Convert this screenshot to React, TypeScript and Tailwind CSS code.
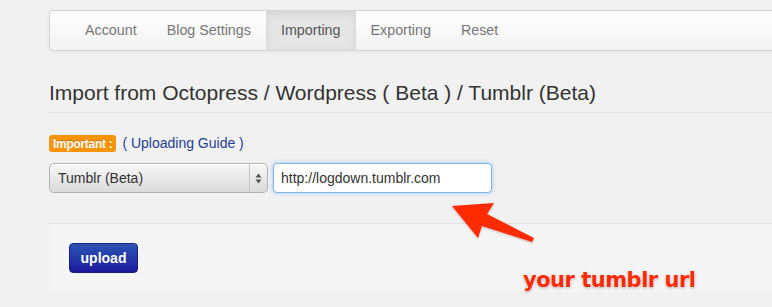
import React from "react";

export default function App() {
  const tabs = ["Account", "Blog Settings", "Importing", "Exporting", "Reset"];

  return (
    <div className="relative w-[772px] h-[307px] overflow-hidden bg-[#f1f1f1] font-['Liberation_Sans',Arial,sans-serif]">
      <div className="ml-[49px] w-[760px] pt-[10px]">
        {/* Settings tabs */}
        <div className="flex h-[41px] rounded-[4px] border border-[#d4d4d4] bg-gradient-to-b from-white to-[#f2f2f2] pl-[20px] shadow-[0_1px_3px_rgba(0,0,0,0.06)]">
          {tabs.map((t) => (
            <div
              key={t}
              className={`flex items-center px-[15px] text-[14.3px] ${
                t === "Importing"
                  ? "bg-[#e5e5e5] text-[#555] shadow-[inset_0_3px_8px_rgba(0,0,0,0.08)]"
                  : "text-[#777]"
              }`}
            >
              {t}
            </div>
          ))}
        </div>

        {/* Title */}
        <h1 className="mt-[27px] h-[30px] text-[21px] leading-[30px] text-[#333]">
          Import from Octopress / Wordpress ( Beta ) / Tumblr (Beta)
        </h1>
        <div className="mt-[4px] border-b border-[#e2e2e2]" />

        {/* Importing form */}
        <div className="mt-[22px] flex h-[17px] items-center gap-[6px]">
          <span className="flex h-[17px] items-center rounded-[3px] bg-[#f89406] px-[4px] text-[12px] font-bold tracking-[-0.3px] text-white [text-shadow:0_-1px_0_rgba(0,0,0,0.25)]">
            Important :
          </span>
          <span className="text-[14px] text-[#1d3f94]">( Uploading Guide )</span>
        </div>

        <div className="mt-[11px] flex gap-[5px]">
          <div className="flex h-[30px] w-[219px] items-center rounded-[5px] border border-[#b3b3b3] bg-gradient-to-b from-[#f8f8f8] to-[#dadada] shadow-[inset_0_1px_0_#fff]">
            <span className="flex-1 pl-[8px] text-[14px] text-[#333]">Tumblr (Beta)</span>
            <div className="flex h-full w-[18px] items-center justify-center border-l border-[#c4c4c4]">
              <svg width="7" height="11" viewBox="0 0 7 11">
                <path d="M3.5 0.5 L6.5 4.5 H0.5 Z" fill="#555" />
                <path d="M3.5 10.5 L6.5 6.5 H0.5 Z" fill="#555" />
              </svg>
            </div>
          </div>
          <div className="flex h-[30px] w-[219px] items-center rounded-[4px] border border-[#7eb3e8] bg-white pl-[7px] text-[14px] text-[#333] shadow-[0_0_4px_rgba(82,168,236,0.55)]">
            http://logdown.tumblr.com
          </div>
        </div>

        <div className="mt-[30px] h-[69px] border-t border-[#e2e2e2] bg-[#f5f5f5] px-[20px] pt-[19px]">
          <button className="h-[30px] w-[69px] rounded-[4px] border border-[#1a1d8c] bg-gradient-to-b from-[#2c52b4] to-[#1e169c] text-[14px] font-bold text-white">
            upload
          </button>
        </div>
      </div>

      {/* Annotation */}
      <svg className="absolute left-0 top-0" width="772" height="307" viewBox="0 0 772 307">
        <defs>
          <filter id="sh" x="-20%" y="-20%" width="140%" height="140%">
            <feDropShadow dx="0" dy="1" stdDeviation="1" floodColor="#000" floodOpacity="0.25" />
          </filter>
        </defs>
        <path
          d="M452 206 L494 203 L487 214 L534 238 L532 242 L482 226 L478 238 Z"
          fill="#ff2a00"
          filter="url(#sh)"
        />
      </svg>
      <div className="absolute left-[523px] top-[265px] font-['DejaVu_Sans',sans-serif] text-[21px] font-bold tracking-[-0.5px] text-[#ff2a00] [text-shadow:0_0_2px_#fff,0_1px_3px_rgba(0,0,0,0.35)]">
        your tumblr url
      </div>
    </div>
  );
}
